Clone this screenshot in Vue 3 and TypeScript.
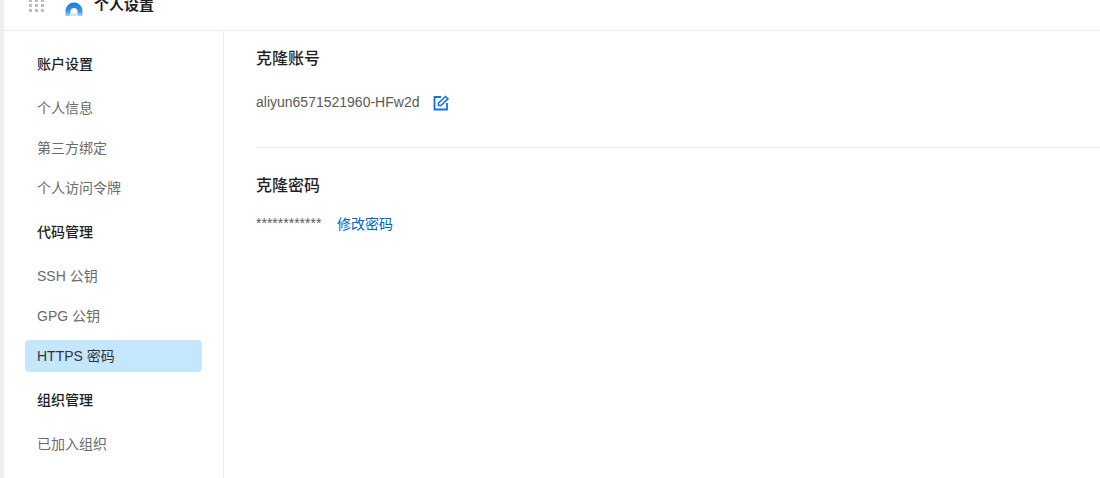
<script setup lang="ts">
interface NavItem { label: string; kind: 'title' | 'item' | 'active' }
const nav: NavItem[] = [
  { label: '账户设置', kind: 'title' },
  { label: '个人信息', kind: 'item' },
  { label: '第三方绑定', kind: 'item' },
  { label: '个人访问令牌', kind: 'item' },
  { label: '代码管理', kind: 'title' },
  { label: 'SSH 公钥', kind: 'item' },
  { label: 'GPG 公钥', kind: 'item' },
  { label: 'HTTPS 密码', kind: 'active' },
  { label: '组织管理', kind: 'title' },
  { label: '已加入组织', kind: 'item' },
]
</script>

<template>
  <div class="page">
    <header class="top">
      <div class="grid-icon"><i v-for="n in 9" :key="n"></i></div>
      <svg class="logo" width="18" height="14" viewBox="0 0 18 14">
        <defs>
          <linearGradient id="lg" x1="0" y1="0" x2="0" y2="1">
            <stop offset="0" stop-color="#1b78d8" />
            <stop offset="0.65" stop-color="#3f96e6" />
            <stop offset="1" stop-color="#a9d2f5" />
          </linearGradient>
        </defs>
        <path d="M0.500 14V9a8.500 8.500 0 0 1 17 0v5h-5V9.500a3.500 3.500 0 0 0-7 0V14z" fill="url(#lg)" />
        <path d="M5.500 11h7v3h-7z" fill="#d4e8fa" />
      </svg>
      <span class="top-title">个人设置</span>
    </header>
    <div class="body">
      <aside class="side">
        <div v-for="n in nav" :key="n.label" :class="['nav', n.kind]">{{ n.label }}</div>
      </aside>
      <main class="main">
        <section class="sec first">
          <h3>克隆账号</h3>
          <div class="row account">
            <span>aliyun6571521960-HFw2d</span>
            <svg class="edit" width="16" height="16" viewBox="0 0 16 16" fill="none" stroke="#1173df" stroke-width="1.800">
              <path d="M8 2H1.500v12.500H14V8" />
              <path d="M5.500 10.500V8l7-6.500 2.400 2.400L8 10.500z" stroke-width="1.600" />
            </svg>
          </div>
        </section>
        <section class="sec second">
          <h3>克隆密码</h3>
          <div class="row pass">
            <span class="stars">************</span>
            <a class="link">修改密码</a>
          </div>
        </section>
      </main>
    </div>
  </div>
</template>

<style scoped>
.page {
  height: 478px;
  overflow: hidden;
  background: #fff;
  border-left: 4px solid #eeeeee;
  box-sizing: border-box;
  font-family: "Liberation Sans", "Noto Sans CJK SC", sans-serif;
  font-size: 14px;
  color: #595959;
}
.top {
  height: 31px;
  box-sizing: border-box;
  border-bottom: 1px solid #ececec;
  display: flex;
  align-items: flex-start;
  overflow: hidden;
}
.grid-icon {
  display: grid;
  grid-template-columns: repeat(3, 3px);
  grid-auto-rows: 3px;
  column-gap: 3px;
  row-gap: 2px;
  margin: -1px 0 0 25px;
}
.grid-icon i { background: #bdbdbd; }
.logo { margin: 2px 0 0 21px; }
.top-title {
  margin: -6px 0 0 11px;
  font-size: 15px;
  line-height: 22px;
  font-weight: 700;
  color: #1f1f1f;
}
.body { display: flex; height: 447px; }
.side {
  width: 220px;
  box-sizing: border-box;
  border-right: 1px solid #ececec;
  padding: 13px 21px 0;
  display: flex;
  flex-direction: column;
  gap: 8px;
}
.nav {
  height: 32px;
  line-height: 32px;
  padding-left: 12px;
  border-radius: 4px;
  color: #6b6b6b;
}
.nav.title {
  height: 40px;
  line-height: 40px;
  font-weight: 500;
  color: #1f1f1f;
}
.nav.active {
  background: #c4e6ff;
  color: #333;
}
.main { flex: 1; padding-left: 32px; }
.sec h3 {
  margin: 0;
  font-size: 16px;
  line-height: 24px;
  font-weight: 500;
  color: #1f1f1f;
}
.first {
  padding-top: 16px;
  height: 117px;
  box-sizing: border-box;
  border-bottom: 1px solid #ececec;
}
.second { padding-top: 26px; }
.row { display: flex; align-items: center; }
.account { margin-top: 20px; height: 22px; gap: 14px; }
.edit { margin-top: 1px; }
.pass { margin-top: 14px; height: 22px; gap: 15px; }
.stars { font-size: 14px; color: #595959; width: 66px; }
.link { color: #0064c8; cursor: pointer; }
</style>
